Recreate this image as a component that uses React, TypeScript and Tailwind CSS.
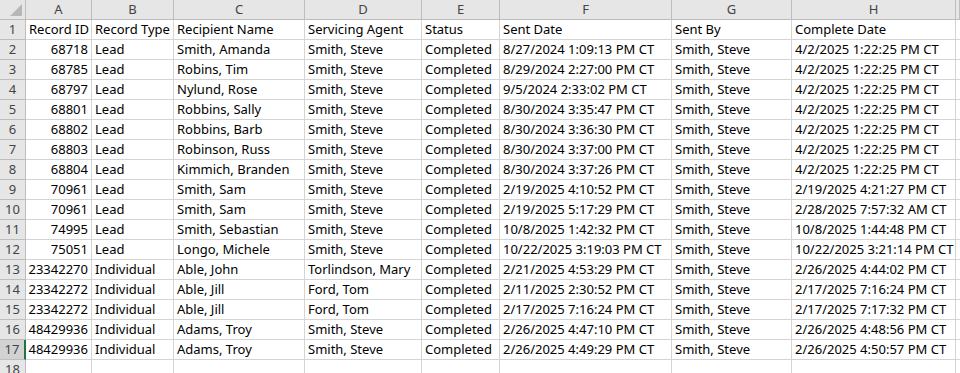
import React from 'react';

const cols = ['A', 'B', 'C', 'D', 'E', 'F', 'G', 'H', ''];

const headers = ['Record ID', 'Record Type', 'Recipient Name', 'Servicing Agent', 'Status', 'Sent Date', 'Sent By', 'Complete Date'];

const rows: string[][] = [
  ['68718', 'Lead', 'Smith, Amanda', 'Smith, Steve', 'Completed', '8/27/2024 1:09:13 PM CT', 'Smith, Steve', '4/2/2025 1:22:25 PM CT'],
  ['68785', 'Lead', 'Robins, Tim', 'Smith, Steve', 'Completed', '8/29/2024 2:27:00 PM CT', 'Smith, Steve', '4/2/2025 1:22:25 PM CT'],
  ['68797', 'Lead', 'Nylund, Rose', 'Smith, Steve', 'Completed', '9/5/2024 2:33:02 PM CT', 'Smith, Steve', '4/2/2025 1:22:25 PM CT'],
  ['68801', 'Lead', 'Robbins, Sally', 'Smith, Steve', 'Completed', '8/30/2024 3:35:47 PM CT', 'Smith, Steve', '4/2/2025 1:22:25 PM CT'],
  ['68802', 'Lead', 'Robbins, Barb', 'Smith, Steve', 'Completed', '8/30/2024 3:36:30 PM CT', 'Smith, Steve', '4/2/2025 1:22:25 PM CT'],
  ['68803', 'Lead', 'Robinson, Russ', 'Smith, Steve', 'Completed', '8/30/2024 3:37:00 PM CT', 'Smith, Steve', '4/2/2025 1:22:25 PM CT'],
  ['68804', 'Lead', 'Kimmich, Branden', 'Smith, Steve', 'Completed', '8/30/2024 3:37:26 PM CT', 'Smith, Steve', '4/2/2025 1:22:25 PM CT'],
  ['70961', 'Lead', 'Smith, Sam', 'Smith, Steve', 'Completed', '2/19/2025 4:10:52 PM CT', 'Smith, Steve', '2/19/2025 4:21:27 PM CT'],
  ['70961', 'Lead', 'Smith, Sam', 'Smith, Steve', 'Completed', '2/19/2025 5:17:29 PM CT', 'Smith, Steve', '2/28/2025 7:57:32 AM CT'],
  ['74995', 'Lead', 'Smith, Sebastian', 'Smith, Steve', 'Completed', '10/8/2025 1:42:32 PM CT', 'Smith, Steve', '10/8/2025 1:44:48 PM CT'],
  ['75051', 'Lead', 'Longo, Michele', 'Smith, Steve', 'Completed', '10/22/2025 3:19:03 PM CT', 'Smith, Steve', '10/22/2025 3:21:14 PM CT'],
  ['23342270', 'Individual', 'Able, John', 'Torlindson, Mary', 'Completed', '2/21/2025 4:53:29 PM CT', 'Smith, Steve', '2/26/2025 4:44:02 PM CT'],
  ['23342272', 'Individual', 'Able, Jill', 'Ford, Tom', 'Completed', '2/11/2025 2:30:52 PM CT', 'Smith, Steve', '2/17/2025 7:16:24 PM CT'],
  ['23342272', 'Individual', 'Able, Jill', 'Ford, Tom', 'Completed', '2/17/2025 7:16:24 PM CT', 'Smith, Steve', '2/17/2025 7:17:32 PM CT'],
  ['48429936', 'Individual', 'Adams, Troy', 'Smith, Steve', 'Completed', '2/26/2025 4:47:10 PM CT', 'Smith, Steve', '2/26/2025 4:48:56 PM CT'],
  ['48429936', 'Individual', 'Adams, Troy', 'Smith, Steve', 'Completed', '2/26/2025 4:49:29 PM CT', 'Smith, Steve', '2/26/2025 4:50:57 PM CT'],
];

const grid = 'grid grid-cols-[26px_66px_82px_131px_117px_78px_172px_120px_164px_1fr]';

function Corner() {
  return (
    <div className="relative h-5 bg-[#e6e6e6] border-r border-b border-[#bdbdbd]">
      <div className="absolute right-[3px] bottom-[3px] w-0 h-0 border-l-[12px] border-l-transparent border-b-[12px] border-b-[#b7b7b7]" />
    </div>
  );
}

const App: React.FC = () => {
  const all = [headers, ...rows, ['', '', '', '', '', '', '', '']];

  return (
    <div className="w-[960px] h-[373px] overflow-hidden bg-white text-black text-[13px] leading-none font-['Noto_Sans',sans-serif]">
      <div className={grid}>
        <Corner />
        {cols.map((c, i) => (
          <div key={i} className="h-5 flex items-center justify-center bg-[#e6e6e6] text-[#444] border-r border-b border-[#bdbdbd]">
            {c}
          </div>
        ))}
      </div>
      {all.map((r, ri) => {
        const selected = ri === 16;
        return (
          <div key={ri} className={grid}>
            <div
              className={
                selected
                  ? 'h-5 flex items-center justify-center bg-[#d2d2d2] text-[#444] border-b border-[#bdbdbd] border-r-2 border-r-[#217346]'
                  : 'h-5 flex items-center justify-center bg-[#e6e6e6] text-[#444] border-r border-b border-[#bdbdbd]'
              }
            >
              {ri + 1}
            </div>
            {r.map((cell, ci) => (
              <div
                key={ci}
                className={
                  ci === 0 && ri > 0
                    ? 'h-5 flex items-center justify-end px-[3px] border-r border-b border-[#d4d4d4] whitespace-nowrap overflow-hidden'
                    : 'h-5 flex items-center px-[3px] border-r border-b border-[#d4d4d4] whitespace-nowrap overflow-hidden'
                }
              >
                {cell}
              </div>
            ))}
            <div className="h-5 border-b border-[#d4d4d4]" />
          </div>
        );
      })}
    </div>
  );
};

export default App;
